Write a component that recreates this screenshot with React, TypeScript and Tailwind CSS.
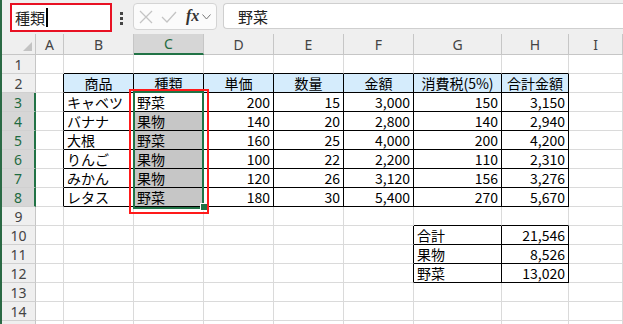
import React from 'react';

const COLS = ['A', 'B', 'C', 'D', 'E', 'F', 'G', 'H', 'I'];
const WIDTHS = ['w-[28px]', 'w-[70px]', 'w-[70px]', 'w-[70px]', 'w-[70px]', 'w-[70px]', 'w-[88px]', 'w-[67px]', 'flex-1'];

type Cell = { v: string; num?: boolean; head?: boolean };

// sheet data keyed by row, then column index (0 = A)
const DATA: Record<number, Record<number, Cell>> = {
    2: {
        1: { v: '商品', head: true }, 2: { v: '種類', head: true }, 3: { v: '単価', head: true },
        4: { v: '数量', head: true }, 5: { v: '金額', head: true }, 6: { v: '消費税(5%)', head: true },
        7: { v: '合計金額', head: true },
    },
};

const ROWS = [
    ['キャベツ', '野菜', '200', '15', '3,000', '150', '3,150'],
    ['バナナ', '果物', '140', '20', '2,800', '140', '2,940'],
    ['大根', '野菜', '160', '25', '4,000', '200', '4,200'],
    ['りんご', '果物', '100', '22', '2,200', '110', '2,310'],
    ['みかん', '果物', '120', '26', '3,120', '156', '3,276'],
    ['レタス', '野菜', '180', '30', '5,400', '270', '5,670'],
];
ROWS.forEach((r, i) => {
    DATA[i + 3] = {};
    r.forEach((v, j) => {
        DATA[i + 3][j + 1] = { v, num: j >= 2 };
    });
});
DATA[10] = { 6: { v: '合計' }, 7: { v: '21,546', num: true } };
DATA[11] = { 6: { v: '果物' }, 7: { v: '8,526', num: true } };
DATA[12] = { 6: { v: '野菜' }, 7: { v: '13,020', num: true } };

const isTable = (r: number, c: number) =>
    (r >= 2 && r <= 8 && c >= 1 && c <= 7) || (r >= 10 && r <= 12 && c >= 6 && c <= 7);

const FONT = { fontFamily: '"Noto Sans CJK JP", "Noto Sans", sans-serif' };

function FormulaBar() {
    return (
        <div className="flex items-start h-[34px] pl-2 pt-[3px] bg-[#efefef]">
            <div className="w-[102px] h-[29px] border-2 border-[#e81123] bg-white flex items-center pl-[3px]">
                <span className="text-[15px] leading-none text-[#222]">種類</span>
                <span className="ml-[1px] w-[2px] h-[19px] bg-black" />
            </div>
            <div className="ml-[8px] mt-[9px] flex flex-col gap-[2px]">
                <span className="w-[3px] h-[3px] bg-[#444]" />
                <span className="w-[3px] h-[3px] bg-[#444]" />
                <span className="w-[3px] h-[3px] bg-[#444]" />
            </div>
            <div className="ml-[10px] w-[84px] h-[27px] border border-[#d4d4d4] rounded-[4px] bg-[#fbfbfb] flex items-center pl-[5px]">
                <svg width="14" height="14" viewBox="0 0 14 14" className="mr-[8px]">
                    <path d="M1 1 L13 13 M13 1 L1 13" stroke="#c4c4c4" strokeWidth="1.3" fill="none" />
                </svg>
                <svg width="16" height="14" viewBox="0 0 16 14" className="mr-[9px]">
                    <path d="M1 7 L6 12 L15 2" stroke="#c4c4c4" strokeWidth="1.3" fill="none" />
                </svg>
                <span
                    className="text-[16px] italic font-bold leading-none text-[#333] mb-[2px]"
                    style={{ fontFamily: '"Liberation Serif", serif' }}
                >
                    fx
                </span>
                <svg width="9" height="6" viewBox="0 0 9 6" className="ml-[3px]">
                    <path d="M0.5 0.5 L4.5 5 L8.5 0.5" stroke="#777" strokeWidth="1" fill="none" />
                </svg>
            </div>
            <div className="ml-[6px] flex-1 h-[26px] border border-r-0 border-[#cfcfcf] rounded-l-[4px] bg-white flex items-center pl-[14px]">
                <span className="text-[15px] leading-none text-[#222]">野菜</span>
            </div>
        </div>
    );
}

function HeaderRow() {
    return (
        <div className="flex h-[21px]">
            <div className="w-[34px] h-full bg-[#efefef] border-r border-b border-[#c6c6c6] relative">
                <svg width="9" height="9" viewBox="0 0 9 9" className="absolute right-[3px] bottom-[3px]">
                    <path d="M9 0 L9 9 L0 9 Z" fill="#c3c3c3" />
                </svg>
            </div>
            {COLS.map((c, i) => {
                const sel = c === 'C';
                return (
                    <div
                        key={c}
                        className={`${WIDTHS[i]} h-full flex items-center justify-center text-[14px] border-r ${sel
                            ? 'bg-[#d6d6d6] text-[#1e6b41] border-b-2 border-b-[#217346] border-r-[#c6c6c6]'
                            : 'bg-[#efefef] text-[#444] border-b border-[#c6c6c6]'
                            }`}
                        style={{ fontFamily: '"Noto Sans", sans-serif' }}
                    >
                        {c}
                    </div>
                );
            })}
        </div>
    );
}

function SheetRow({ r }: { r: number }) {
    const selRow = r >= 3 && r <= 8;
    return (
        <div className="flex h-[19px]">
            <div
                className={`w-[34px] h-full flex items-center justify-center text-[14px] border-b border-b-[#d0d0d0] ${selRow
                    ? 'bg-[#d6d6d6] text-[#1e6b41] border-r-2 border-r-[#217346]'
                    : 'bg-[#efefef] text-[#444] border-r border-r-[#c6c6c6]'
                    }`}
                style={{ fontFamily: '"Noto Sans", sans-serif' }}
            >
                {r <= 14 ? r : ''}
            </div>
            {COLS.map((c, ci) => {
                const cell = DATA[r]?.[ci];
                const rb = isTable(r, ci) || isTable(r, ci + 1) ? 'border-r-black' : 'border-r-[#dadada]';
                const bb = isTable(r, ci) || isTable(r + 1, ci) ? 'border-b-black' : 'border-b-[#dadada]';
                let bg = 'bg-white';
                if (cell?.head) bg = 'bg-[#d5ecfc]';
                if (ci === 2 && r >= 4 && r <= 8) bg = 'bg-[#c6c6c6]';
                const align = cell?.head ? 'justify-center' : cell?.num ? 'justify-end pr-[3px]' : 'justify-start pl-[3px]';
                return (
                    <div
                        key={c}
                        className={`${WIDTHS[ci]} h-full border-r border-b ${rb} ${bb} ${bg} flex items-center ${align} text-[14px] leading-[18px] text-black whitespace-nowrap overflow-hidden`}
                    >
                        {cell?.v}
                    </div>
                );
            })}
        </div>
    );
}

export default function App() {
    const rows = Array.from({ length: 15 }, (_, i) => i + 1);
    return (
        <div className="w-[623px] h-[324px] overflow-hidden bg-white border-l-2 border-[#2b6a45]" style={FONT}>
            <FormulaBar />
            <div className="relative">
                <HeaderRow />
                {rows.map((r) => (
                    <SheetRow key={r} r={r} />
                ))}
                {/* selection border C3:C8 */}
                <div className="absolute left-[131px] top-[57px] w-[71px] h-[118px] border-2 border-[#217346] pointer-events-none" />
                <div className="absolute left-[199px] top-[170px] w-[6px] h-[6px] bg-[#217346] outline outline-1 outline-white pointer-events-none" />
                {/* red highlight */}
                <div className="absolute left-[127px] top-[55px] w-[80px] h-[125px] border-2 border-[#ff1a1a] pointer-events-none" />
            </div>
        </div>
    );
}
